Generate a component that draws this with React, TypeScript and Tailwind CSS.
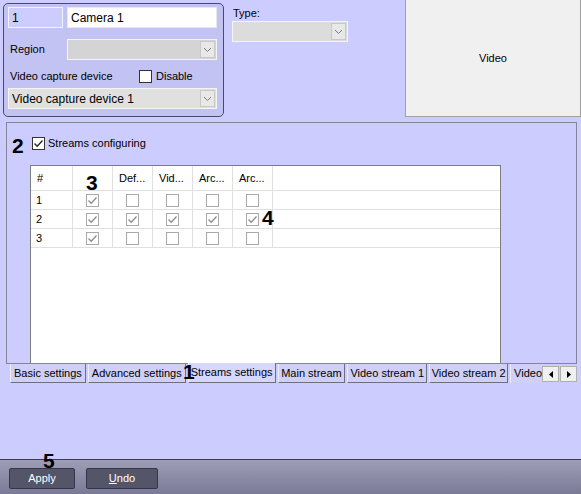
import React from "react";

function Check({ checked, dim }: { checked?: boolean; dim?: boolean }) {
  return (
    <span
      className={`inline-flex h-[13px] w-[13px] shrink-0 items-center justify-center border bg-white ${
        dim ? "border-[#a9a9a9]" : "border-[#333333]"
      }`}
    >
      {checked && (
        <svg width="11" height="11" viewBox="0 0 11 11">
          <polyline
            points="1.5,5.5 4.2,8.2 9.5,2.5"
            fill="none"
            stroke={dim ? "#8c8c8c" : "#222222"}
            strokeWidth="1.3"
          />
        </svg>
      )}
    </span>
  );
}

function Combo({ className, text, bg }: { className: string; text?: string; bg: string }) {
  return (
    <div className={`flex h-[21px] items-center border border-[#f4f4f4] ${bg} ${className}`}>
      <span className="flex-1 truncate pl-[3px]">{text}</span>
      <span className="mr-[1px] flex h-[17px] w-[15px] items-center justify-center border border-[#c8c8c8] bg-[#e8e8e8]">
        <svg width="9" height="6" viewBox="0 0 9 6">
          <polyline points="1,1 4.5,4.5 8,1" fill="none" stroke="#7a7a7a" strokeWidth="1" />
        </svg>
      </span>
    </div>
  );
}

const cols = [42, 40, 40, 40, 40, 40];
const headers = ["#", "", "Def...", "Vid...", "Arc...", "Arc..."];
const rows: boolean[][] = [
  [true, false, false, false, false],
  [true, true, true, true, true],
  [true, false, false, false, false],
];

const tabs = [
  { t: "Basic settings", w: 76 },
  { t: "Advanced settings", w: 98 },
  { t: "Streams settings", w: 88, sel: true },
  { t: "Main stream", w: 68 },
  { t: "Video stream 1", w: 80 },
  { t: "Video stream 2", w: 79 },
];

export default function App() {
  return (
    <div className="relative flex h-[494px] w-[581px] flex-col overflow-hidden bg-[#ccccff] font-['Liberation_Sans',Arial,sans-serif] text-[11px] text-black">
      {/* top area */}
      <div className="flex h-[118px]">
        <div className="ml-[3px] mt-[3px] h-[114px] w-[221px] rounded-[5px] border border-[#4a4a66] bg-[#c3c3f3] pl-[4px] pt-[3px]">
          <div className="flex gap-[4px] text-[12px]">
            <div className="flex h-[21px] w-[55px] items-center border border-[#f2f2ff] bg-[#ccccff] pl-[3px]">1</div>
            <div className="flex h-[21px] w-[150px] items-center border border-[#e8e8e8] bg-white pl-[3px]">Camera 1</div>
          </div>
          <div className="mt-[11px] flex items-center">
            <span className="w-[59px] pl-[2px]">Region</span>
            <Combo className="w-[150px]" bg="bg-[#d4d4d4]" />
          </div>
          <div className="mt-[8px] flex h-[16px] items-center">
            <span className="w-[131px] pl-[2px]">Video capture device</span>
            <Check />
            <span className="ml-[4px]">Disable</span>
          </div>
          <Combo className="mt-[4px] w-[209px] text-[12px]" bg="bg-[#e0e0e0]" text="Video capture device 1" />
        </div>
        <div className="ml-[8px] pt-[5px]">
          <div className="h-[16px] pl-[1px]">Type:</div>
          <Combo className="w-[116px]" bg="bg-[#dcdcdc]" />
        </div>
        <div className="ml-auto flex h-[117px] w-[176px] items-center justify-center border-x border-b border-[#a0a0a0] bg-[#f0f0f0]">
          Video
        </div>
      </div>

      {/* streams panel */}
      <div className="ml-[6px] mt-[4px] w-[571px]">
        <div className="flex h-[241px] flex-col border-x border-t border-[#84849a] pl-[23px]">
          <div className="mt-[14px] flex h-[13px] items-center pl-[2px]">
            <Check checked />
            <span className="ml-[3px]">Streams configuring</span>
          </div>
          <div className="mt-[15px] w-[471px] flex-1 border-x border-t border-[#7c7c7c] bg-white">
            <div className="flex h-[25px] border-b border-[#e0e0e0]">
              {headers.map((h, i) => (
                <div
                  key={i}
                  style={{ width: cols[i] }}
                  className="flex items-center border-r border-[#e0e0e0] pl-[6px]"
                >
                  {h}
                </div>
              ))}
            </div>
            {rows.map((r, ri) => (
              <div key={ri} className="flex h-[19px] border-b border-[#e0e0e0]">
                <div style={{ width: cols[0] }} className="flex items-center border-r border-[#e0e0e0] pl-[5px]">
                  {ri + 1}
                </div>
                {r.map((c, ci) => (
                  <div
                    key={ci}
                    style={{ width: cols[ci + 1] }}
                    className="flex items-center justify-center border-r border-[#e0e0e0]"
                  >
                    <Check checked={c} dim />
                  </div>
                ))}
              </div>
            ))}
          </div>
        </div>
        <div className="flex h-[21px] items-start gap-[2px] border-t border-[#84849a] pl-[4px]">
          {tabs.map((tab) => (
            <div
              key={tab.t}
              style={{ width: tab.w }}
              className={`flex items-center justify-center whitespace-nowrap border-b border-r border-[#6e6e7e] ${
                tab.sel
                  ? "-mt-[1px] h-[20px] border-l border-l-[#f4f4ff] bg-[#d6d6ff]"
                  : "h-[19px] border-l border-l-[#ececff] bg-[#d0d0f6]"
              }`}
            >
              {tab.t}
            </div>
          ))}
          <div className="flex h-[19px] w-[32px] items-center overflow-hidden border-l border-l-[#ececff] bg-[#d0d0f6] pl-[3px]">
            Video
          </div>
          <div className="-ml-[2px] mt-[2px] flex">
            <span className="flex h-[16px] w-[17px] items-center justify-center border border-[#b0b0b0] bg-[#f0f0f0]">
              <svg width="4" height="7" viewBox="0 0 4 7">
                <polygon points="4,0 0,3.5 4,7" fill="#000" />
              </svg>
            </span>
            <span className="ml-[1px] flex h-[16px] w-[17px] items-center justify-center border border-[#b0b0b0] bg-[#f0f0f0]">
              <svg width="4" height="7" viewBox="0 0 4 7">
                <polygon points="0,0 4,3.5 0,7" fill="#000" />
              </svg>
            </span>
          </div>
        </div>
      </div>

      <div className="flex-1" />

      {/* bottom bar */}
      <div className="flex h-[35px] items-start gap-[11px] border-t border-[#3c3c4e] bg-gradient-to-b from-[#9e9eb8] to-[#7a7a96] pl-[9px] pt-[8px]">
        <button className="h-[21px] w-[66px] rounded-[2px] border border-[#36364a] bg-[#55556a] text-[11px] text-white">
          Apply
        </button>
        <button className="h-[21px] w-[72px] rounded-[2px] border border-[#36364a] bg-[#55556a] text-[11px] text-white">
          <span className="underline">U</span>ndo
        </button>
      </div>

      {/* annotation numbers */}
      <span className="absolute left-[12px] top-[134px] text-[21px] font-bold leading-[24px]">2</span>
      <span className="absolute left-[86px] top-[171px] text-[21px] font-bold leading-[24px]">3</span>
      <span className="absolute left-[262px] top-[206px] text-[21px] font-bold leading-[24px]">4</span>
      <span className="absolute left-[183px] top-[360px] text-[21px] font-bold leading-[24px]">1</span>
      <span className="absolute left-[43px] top-[449px] text-[21px] font-bold leading-[24px]">5</span>
    </div>
  );
}
